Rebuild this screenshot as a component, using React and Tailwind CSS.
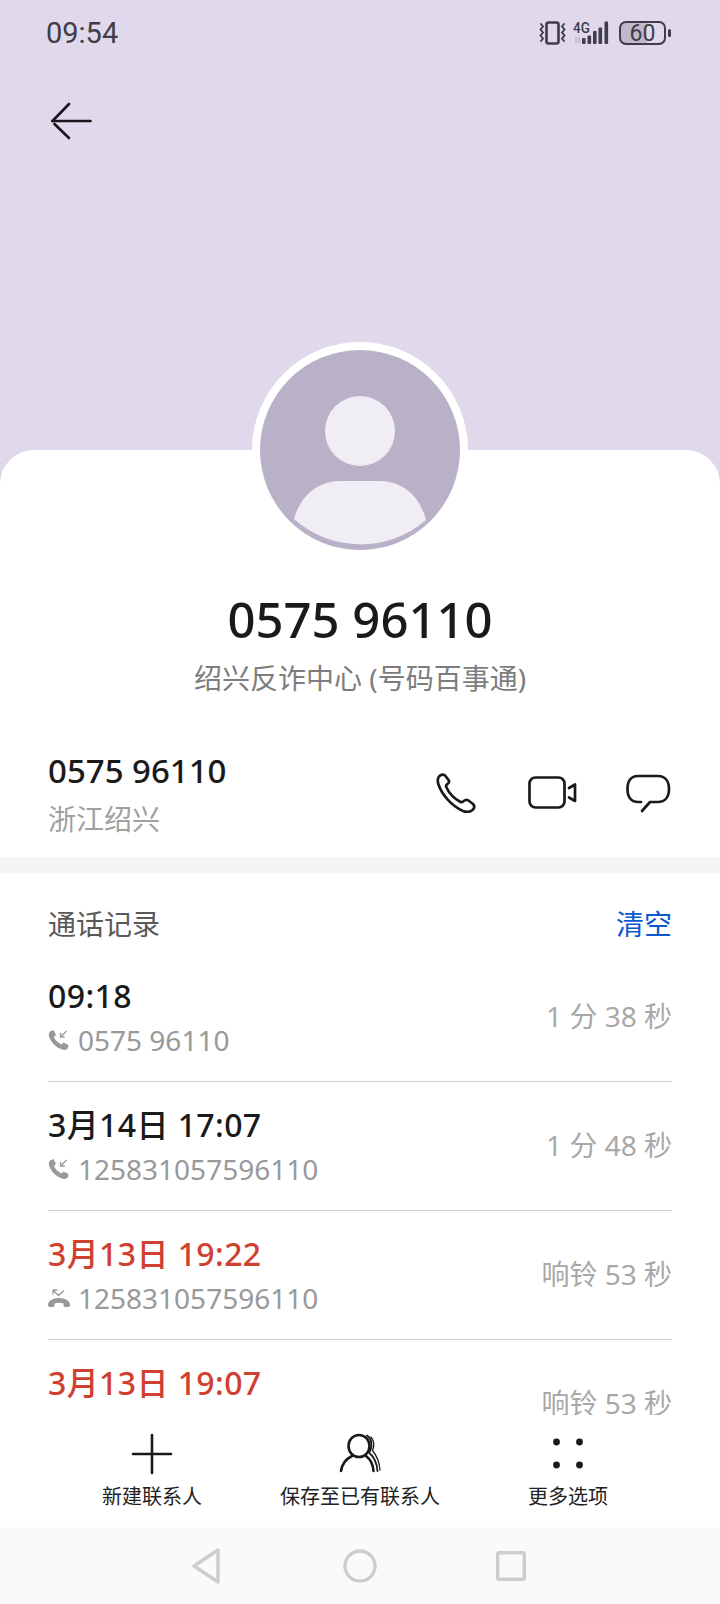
const calls = [
  { time: '09:18', number: '0575 96110', type: 'in', right: '1 分 38 秒' },
  { time: '3月14日 17:07', number: '125831057596110', type: 'in', right: '1 分 48 秒' },
  { time: '3月13日 19:22', number: '125831057596110', type: 'missed', right: '响铃 53 秒' },
  { time: '3月13日 19:07', number: '125831057596110', type: 'missed', right: '响铃 53 秒' },
];

const StatusIcons = () => (
  <div className="flex items-center">
    {/* vibrate */}
    <svg width="29" height="24" viewBox="0 0 29 24" fill="none" stroke="#3f3d48" strokeWidth="2" strokeLinecap="round">
      <rect x="8.5" y="1.5" width="12" height="21" rx="2" strokeWidth="2.6" />
      <path d="M3 3 l2 2.5 l-2.5 3 l2.5 3 l-2.5 3 l2.5 3 l-2 2.5" strokeWidth="1.9" />
      <path d="M26 3 l-2 2.5 l2.5 3 l-2.5 3 l2.5 3 l-2.5 3 l2 2.5" strokeWidth="1.9" />
    </svg>
    {/* 4G + signal */}
    <div className="ml-[6px] relative w-[38px] h-[24px] flex items-start">
      <span className="text-[15px] leading-[14px] font-medium text-[#3f3d48] font-['Roboto',sans-serif] scale-x-90 origin-left">4G</span>
      <svg className="absolute left-0 top-0" width="38" height="24" viewBox="0 0 38 24" fill="#3f3d48">
        <path d="M3 16 v6 M6 22 v-6" stroke="#b4afc0" strokeWidth="1.4" />
        <rect x="9" y="17" width="3.6" height="6" rx="1" />
        <rect x="14.5" y="14.5" width="3.6" height="8.5" rx="1" />
        <rect x="20" y="10" width="3.6" height="13" rx="1" />
        <rect x="25.5" y="6.5" width="3.6" height="16.5" rx="1" />
        <rect x="31.5" y="0.5" width="3.6" height="22.5" rx="1" />
      </svg>
    </div>
    {/* battery */}
    <div className="ml-[8px] w-[47px] h-[24px] rounded-[7px] border-2 border-[#3f3d48] flex items-center justify-center text-[23px] leading-none text-[#3f3d48] font-['Roboto',sans-serif] bg-[linear-gradient(90deg,#bfb9ca_60%,transparent_60%)]">
      60
    </div>
    <div className="ml-[2px] w-[3px] h-[8px] rounded-full bg-[#3f3d48]" />
  </div>
);

const CallIcon = ({ type }) =>
  type === 'in' ? (
    <svg width="22" height="22" viewBox="0 0 22 22" fill="#999999">
      <path d="M2 2.5 L5.5 1 L8 6 L6 8 C7 11 10 14 13.5 15.5 L15.5 13.5 L20.5 16 L20 19 C19 21 16.5 21.5 14 20.5 C8 18.5 3 13.5 1 7.5 C0.5 5.5 1 3.5 2 2.5 Z" />
      <path d="M18.5 2 L12.5 8 M12.5 3.8 V8 H16.7" fill="none" stroke="#999999" strokeWidth="1.3" />
    </svg>
  ) : (
    <svg width="22" height="22" viewBox="0 0 22 22" fill="#999999">
      <path d="M0 18 C0 14 4.5 11 11 11 C17.5 11 22 14 22 18 C22 19.5 21 20 20 20 L17 20 C16 20 15.5 19 15.5 18 L15.5 16.5 C13 15.5 9 15.5 6.5 16.5 L6.5 18 C6.5 19 6 20 5 20 L2 20 C1 20 0 19.5 0 18 Z" />
      <path d="M5 3 L10.5 8.5 L16 3.5 M5 3 V7.5 M5 3 H9.5" fill="none" stroke="#999999" strokeWidth="1.3" />
    </svg>
  );

const CallRow = ({ call }) => (
  <div className="flex-none h-[129px] border-b border-[#cfcfcf] flex items-center justify-between">
    <div className="flex flex-col pt-[2px]">
      <div className={`text-[32px] leading-[44px] font-medium tracking-[0.4px] ${call.type === 'missed' ? 'text-[#cf4030]' : 'text-[#1a1a1a]'}`}>{call.time}</div>
      <div className="flex items-center gap-[8px] text-[28px] leading-[44px] text-[#999999]">
        <CallIcon type={call.type} />
        <span>{call.number}</span>
      </div>
    </div>
    <div className="text-[28px] leading-[36px] text-[#a8a8a8] mt-[-2px]">{call.right}</div>
  </div>
);

export default function App() {
  return (
    <div className="w-[720px] h-[1604px] overflow-hidden flex flex-col bg-[#e0d9ec] font-['Noto_Sans','Noto_Sans_CJK_SC',sans-serif]">
      {/* lilac header */}
      <div className="flex-none h-[450px] px-[46px] pt-[16px]">
        <div className="flex items-center justify-between h-[34px] pr-[3px]">
          <span className="text-[29px] leading-none text-[#3f3d48] font-['Roboto',sans-serif]">09:54</span>
          <StatusIcons />
        </div>
        <svg className="mt-[52px] ml-[5px]" width="42" height="38" viewBox="0 0 42 38" fill="none" stroke="#17171c" strokeWidth="2.6" strokeLinecap="round">
          <path d="M1.5 19 H39.5" />
          <path d="M18 2 L1.5 19" />
          <path d="M3.5 22 L18 36" />
        </svg>
      </div>

      {/* white card */}
      <div className="flex-1 min-h-0 bg-white rounded-t-[34px] flex flex-col">
        <div className="flex-none self-center -mt-[108px] w-[216px] h-[216px] rounded-full bg-white flex items-center justify-center">
          <svg width="200" height="200" viewBox="0 0 200 200">
            <circle cx="100" cy="100" r="100" fill="#b9b1c7" />
            <circle cx="100" cy="81" r="35" fill="#f0eef4" />
            <path d="M34 169 C40 146 58 131 80 131 L120 131 C142 131 160 146 166 170 A100 100 0 0 1 34 169 Z" fill="#f0eef4" />
          </svg>
        </div>

        <div className="flex-none text-center mt-[31px] text-[49px] leading-[60px] font-medium text-[#1a1a1a]">0575 96110</div>
        <div className="flex-none text-center mt-[11px] text-[28px] leading-[36px] text-[#7d7d7d]">绍兴反诈中心 (号码百事通)</div>

        <div className="flex-none mt-[50px] h-[111px] pl-[48px] pr-[48px] flex items-start justify-between">
          <div className="flex flex-col">
            <span className="text-[33px] leading-[49px] font-medium text-[#1a1a1a]">0575 96110</span>
            <span className="text-[28px] leading-[49px] text-[#a0a0a0]">浙江绍兴</span>
          </div>
          <div className="flex items-center mt-[26px]">
            <svg width="40" height="40" viewBox="0 0 40 40" fill="none" stroke="#1a1a1a" strokeWidth="2.7" strokeLinejoin="round">
              <path d="M3 3.5 C5 1 8 1 9.5 3 L12.5 7 C13.5 8.5 13 10 11.5 11 L10.5 12 C10 12.5 10 13.5 10.5 14.5 C13 20 19 26 24.5 29 C25.5 29.5 26.5 29 27 28.5 L28.5 27.5 C30 26.5 31 26.5 32.5 27.5 L37 31 C39 33 38.5 35 36.5 37 C34 39 31 39.5 27 38 C16 33 6 22 2.5 11.5 C1.5 8.5 1.5 5.5 3 3.5 Z" />
            </svg>
            <svg className="ml-[52px]" width="50" height="34" viewBox="0 0 50 34" fill="none" stroke="#1a1a1a" strokeWidth="2.7" strokeLinejoin="round" strokeLinecap="round">
              <rect x="1.5" y="1.5" width="35" height="30" rx="6" />
              <path d="M41 12 L47 8.5 V25 L41 21.5" />
            </svg>
            <svg className="ml-[48px] mt-[2px]" width="46" height="40" viewBox="0 0 46 40" fill="none" stroke="#1a1a1a" strokeWidth="2.7" strokeLinecap="round" strokeLinejoin="round">
              <path d="M15 28 H12 C5 28 1.5 23 1.5 15 C1.5 7 5 2 12 2 H32 C39 2 43 7 43 15 C43 23 39 28 32 28 H24 L16 37" />
            </svg>
          </div>
        </div>

        <div className="flex-none h-[16px] bg-[#f5f5f5]" />

        <div className="flex-none h-[80px] px-[48px] pt-[33px] flex items-start justify-between">
          <span className="text-[28px] leading-[36px] text-[#595959]">通话记录</span>
          <span className="text-[28px] leading-[36px] text-[#0a59d0]">清空</span>
        </div>

        <div className="flex-1 min-h-0 overflow-hidden px-[48px] flex flex-col">
          {calls.map((c, i) => (
            <CallRow key={i} call={c} />
          ))}
        </div>

        {/* bottom actions */}
        <div className="flex-none h-[112px] bg-white px-[48px] grid grid-cols-3">
          <div className="flex flex-col items-center">
            <svg className="mt-[18px]" width="42" height="42" viewBox="0 0 42 42" fill="none" stroke="#1a1a1a" strokeWidth="2.6" strokeLinecap="round">
              <path d="M21 2 V40 M2 21 H40" />
            </svg>
            <span className="mt-[8px] text-[20px] leading-[28px] text-[#222222]">新建联系人</span>
          </div>
          <div className="flex flex-col items-center">
            <svg className="mt-[18px]" width="44" height="42" viewBox="0 0 44 42" fill="none" stroke="#1a1a1a" strokeWidth="2.6" strokeLinecap="round">
              <ellipse cx="21" cy="13" rx="10.5" ry="11" />
              <path d="M3 38 C4 31 8 26 14 23 M28 23 C32 26 35 31 35.5 38" />
              <path d="M29 2.5 C34 6 35 14 31 19.5 C36 24 39 30 39.5 38" strokeWidth="1.8" />
              <path d="M33 4 C36 8 36.5 13 34.5 17.5 C39 23 41.5 30 42 37" strokeWidth="1.3" />
            </svg>
            <span className="mt-[8px] text-[20px] leading-[28px] text-[#222222] whitespace-nowrap">保存至已有联系人</span>
          </div>
          <div className="flex flex-col items-center">
            <svg className="mt-[18px]" width="42" height="42" viewBox="0 0 42 42" fill="#1a1a1a">
              <circle cx="9.5" cy="9" r="3.4" />
              <circle cx="32.5" cy="9" r="3.4" />
              <circle cx="9.5" cy="32" r="3.4" />
              <circle cx="32.5" cy="32" r="3.4" />
            </svg>
            <span className="mt-[8px] text-[20px] leading-[28px] text-[#222222]">更多选项</span>
          </div>
        </div>

        {/* system nav */}
        <div className="flex-none h-[77px] pr-[4px] bg-[#fafafa] flex items-center justify-center">
          <svg width="30" height="36" viewBox="0 0 30 36" fill="none" stroke="#cdcdcd" strokeWidth="3.4" strokeLinejoin="round" className="mr-[122px]">
            <path d="M27 2 V34 L3 18 Z" />
          </svg>
          <svg width="34" height="34" viewBox="0 0 34 34" fill="none" stroke="#cdcdcd" strokeWidth="3.4">
            <circle cx="17" cy="17" r="15" />
          </svg>
          <svg width="30" height="30" viewBox="0 0 30 30" fill="none" stroke="#cdcdcd" strokeWidth="3.4" className="ml-[119px]">
            <rect x="1.7" y="1.7" width="26.6" height="26.6" rx="1.5" />
          </svg>
        </div>
      </div>
    </div>
  );
}
